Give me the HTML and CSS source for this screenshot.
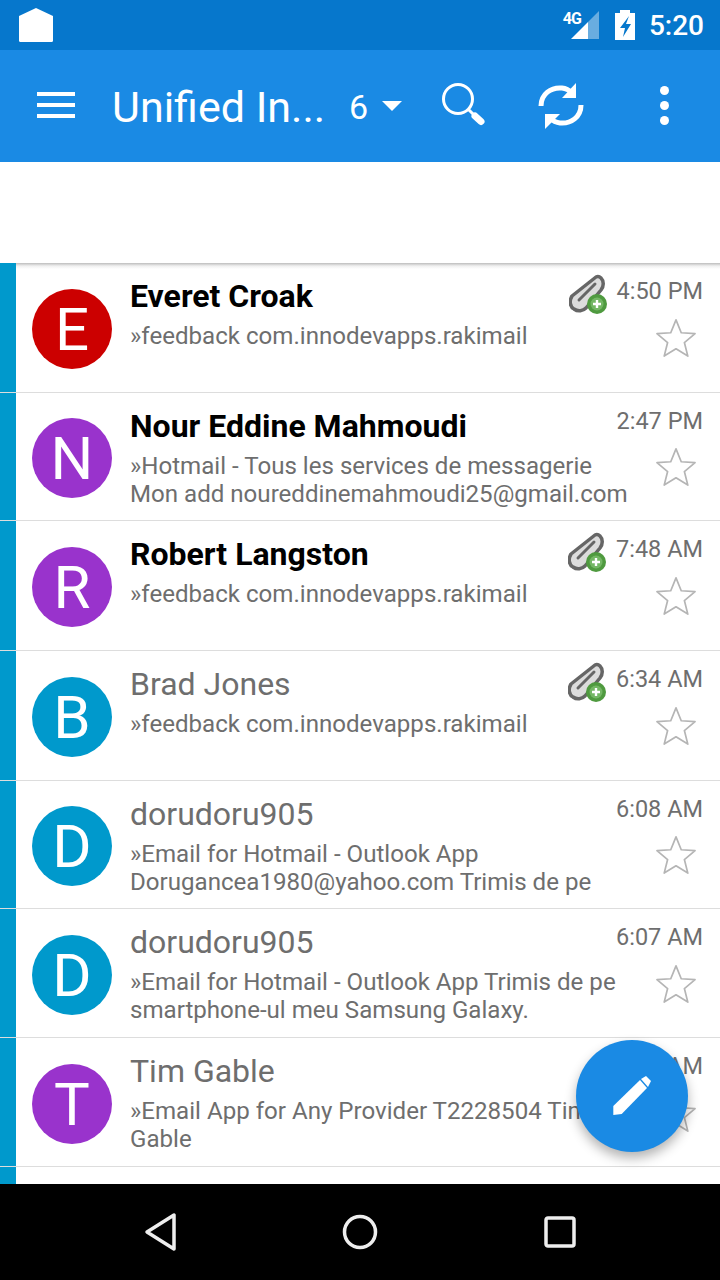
FILE: index.html
```html
<!DOCTYPE html>
<html lang="en">
<head>
  <meta charset="UTF-8">
  <meta name="viewport" content="width=device-width, initial-scale=1.0">
  <title>Unified Inbox</title>
  <link rel="stylesheet" href="styles.css">
</head>
<body>
  <div class="phone">
    <!-- Status bar -->
    <div class="status-bar">
      <svg class="notif-icon" width="34" height="34" viewBox="0 0 34 34"><path d="M0 8 17 0l17 8v24.500a1.500 1.500 0 0 1-1.500 1.500h-31A1.500 1.500 0 0 1 0 32.500z" fill="#fff"/></svg>
      <div class="status-right">
        <span class="net-label">4G</span>
        <svg class="signal" width="28" height="28" viewBox="0 0 28 28"><path d="M28 0v28H17V11z" fill="#fff" fill-opacity=".4"/><path d="M17 11v17H0z" fill="#fff"/></svg>
        <svg class="battery" width="20" height="30" viewBox="0 0 20 30"><path d="M5 0h10v3h5v27H0V3h5z" fill="#fff"/><path d="M14 6 5 18h5l-2 9 8-13h-5l3-8z" fill="#0677cc"/></svg>
        <span class="clock">5:20</span>
      </div>
    </div>

    <!-- App bar -->
    <div class="app-bar">
      <div class="menu-icon"><span></span><span></span><span></span></div>
      <div class="title">Unified In...</div>
      <div class="count">6</div>
      <div class="caret"></div>
      <svg class="search-icon" width="46" height="46" viewBox="0 0 46 46"><circle cx="17" cy="16" r="14.500" fill="none" stroke="#fff" stroke-width="3"/><path d="M27 26 34 33" stroke="#fff" stroke-width="3"/><path d="M34 33 40 38.500" stroke="#fff" stroke-width="7" stroke-linecap="round"/></svg>
      <svg class="sync-icon" width="46" height="48" viewBox="0 0 46 48"><path d="M3 24C3 12 13 5 24 6c4 .4 7 2 10 5" fill="none" stroke="#fff" stroke-width="5"/><path d="M38 1v15H24z" fill="#fff"/><path d="M43 23C43 35 33 42 22 41c-4-.4-7-2-10-5" fill="none" stroke="#fff" stroke-width="5"/><path d="M7 47V32h15z" fill="#fff"/></svg>
      <div class="more-icon"><span></span><span></span><span></span></div>
    </div>

    <!-- Empty white band above the list -->
    <div class="spacer"></div>

    <div class="list">
      <div class="row h-130 unread">
        <div class="avatar red">E</div>
        <div class="body">
          <div class="name">Everet Croak</div>
          <div class="preview">»feedback com.innodevapps.rakimail</div>
        </div>
        <div class="side">
          <div class="side-top">
            <svg class="clip-icon" viewBox="0 0 40 40"><use href="#clip"/></svg>
            <span class="time">4:50 PM</span>
          </div>
          <svg class="star" viewBox="0 0 42 42"><use href="#star"/></svg>
        </div>
      </div>
      <div class="row h-128 unread">
        <div class="avatar purple">N</div>
        <div class="body">
          <div class="name">Nour Eddine Mahmoudi</div>
          <div class="preview">»Hotmail - Tous les services de messagerie<br>Mon add noureddinemahmoudi25@gmail.com</div>
        </div>
        <div class="side">
          <div class="side-top"><span class="time">2:47 PM</span></div>
          <svg class="star" viewBox="0 0 42 42"><use href="#star"/></svg>
        </div>
      </div>
      <div class="row h-130 unread">
        <div class="avatar purple">R</div>
        <div class="body">
          <div class="name">Robert Langston</div>
          <div class="preview">»feedback com.innodevapps.rakimail</div>
        </div>
        <div class="side">
          <div class="side-top">
            <svg class="clip-icon" viewBox="0 0 40 40"><use href="#clip"/></svg>
            <span class="time">7:48 AM</span>
          </div>
          <svg class="star" viewBox="0 0 42 42"><use href="#star"/></svg>
        </div>
      </div>
      <div class="row h-130">
        <div class="avatar blue">B</div>
        <div class="body">
          <div class="name">Brad Jones</div>
          <div class="preview">»feedback com.innodevapps.rakimail</div>
        </div>
        <div class="side">
          <div class="side-top">
            <svg class="clip-icon" viewBox="0 0 40 40"><use href="#clip"/></svg>
            <span class="time">6:34 AM</span>
          </div>
          <svg class="star" viewBox="0 0 42 42"><use href="#star"/></svg>
        </div>
      </div>
      <div class="row h-128">
        <div class="avatar blue">D</div>
        <div class="body">
          <div class="name">dorudoru905</div>
          <div class="preview">»Email for Hotmail - Outlook App<br>Dorugancea1980@yahoo.com Trimis de pe</div>
        </div>
        <div class="side">
          <div class="side-top"><span class="time">6:08 AM</span></div>
          <svg class="star" viewBox="0 0 42 42"><use href="#star"/></svg>
        </div>
      </div>
      <div class="row h-129">
        <div class="avatar blue">D</div>
        <div class="body">
          <div class="name">dorudoru905</div>
          <div class="preview">»Email for Hotmail - Outlook App Trimis de pe<br>smartphone-ul meu Samsung Galaxy.</div>
        </div>
        <div class="side">
          <div class="side-top"><span class="time">6:07 AM</span></div>
          <svg class="star" viewBox="0 0 42 42"><use href="#star"/></svg>
        </div>
      </div>
      <div class="row h-129">
        <div class="avatar purple">T</div>
        <div class="body">
          <div class="name">Tim Gable</div>
          <div class="preview">»Email App for Any Provider T2228504 Tim<br>Gable</div>
        </div>
        <div class="side">
          <div class="side-top"><span class="time">6:02 AM</span></div>
          <svg class="star" viewBox="0 0 42 42"><use href="#star"/></svg>
        </div>
      </div>
      <div class="row-end"></div>
    </div>

    <!-- Compose button -->
    <div class="fab">
      <svg width="44" height="44" viewBox="0 0 44 44"><path d="M3.300 41V32L30 6l7 8-25.300 26z" fill="#fff"/><path d="M31 5l5-3 5 5-3 6z" fill="#fff"/></svg>
    </div>

    <!-- Nav bar -->
    <div class="nav-bar">
      <svg width="36" height="40" viewBox="0 0 36 40"><path d="M32 3v34L5 20z" fill="none" stroke="#eee" stroke-width="3.500" stroke-linejoin="round"/></svg>
      <svg width="36" height="36" viewBox="0 0 36 36"><circle cx="18" cy="18" r="15.500" fill="none" stroke="#eee" stroke-width="3.500"/></svg>
      <svg width="32" height="32" viewBox="0 0 32 32"><rect x="2" y="2" width="28" height="28" rx="2" fill="none" stroke="#eee" stroke-width="3.500"/></svg>
    </div>
  </div>

  <!-- Shared icons -->
  <svg class="defs" width="0" height="0">
    <defs>
      <symbol id="star" viewBox="0 0 42 42">
        <path d="M21 2l5.500 13.500 14.500 1-11.200 9.300 3.600 14.200L21 32.300 8.600 40l3.600-14.200L1 16.500l14.500-1z" fill="none" stroke="#b5b5b5" stroke-width="1.800" stroke-linejoin="round"/>
      </symbol>
      <symbol id="clip" viewBox="0 0 40 40">
        <path d="M27 3 3 22C0 27 1 33 5 35c4 3 9 2 12-1L32 16c3-4 3-9 0-12-1-1-3-2-5-1z" fill="#dcdcdc" stroke="#666" stroke-width="3.500" stroke-linejoin="round"/>
        <path d="M10 26 26 10" stroke="#666" stroke-width="3" stroke-linecap="round"/>
        <circle cx="28" cy="30" r="10" fill="#4f9a3f"/>
        <circle cx="28" cy="30" r="6.500" fill="#74b765"/>
        <path d="M28 26v8M24 30h8" stroke="#fff" stroke-width="2.400"/>
      </symbol>
    </defs>
  </svg>
</body>
</html>
```

FILE: styles.css
```css
/* General styles */
body {
  margin: 0;
  font-family: Roboto, sans-serif;
  background: #fff;
}

.phone {
  position: relative;
  display: flex;
  flex-direction: column;
  width: 720px;
  height: 1280px;
  overflow: hidden;
}

/* Status bar */
.status-bar {
  display: flex;
  align-items: center;
  justify-content: space-between;
  flex: 0 0 50px;
  padding: 0 16px 0 19px;
  background: #0677cc;
  color: #fff;
}

.status-right {
  display: flex;
  align-items: center;
}

.net-label {
  margin: -14px -10px 0 0;
  font-size: 16px;
  font-weight: 700;
  letter-spacing: -1px;
}

.battery {
  margin: 0 14px 0 16px;
}

.clock {
  font-size: 28px;
  font-weight: 500;
}

/* App bar */
.app-bar {
  display: flex;
  align-items: center;
  flex: 0 0 112px;
  background: #1a8ae4;
  color: #fff;
}

.menu-icon {
  display: flex;
  flex-direction: column;
  gap: 7px;
  width: 38px;
  margin: -2px 0 0 37px;
}

.menu-icon span {
  height: 4px;
  background: #fff;
}

.title {
  width: 237px;
  margin: 2px 0 0 37px;
  font-size: 43px;
}

.count {
  margin-top: 2px;
  font-size: 34px;
}

.caret {
  width: 0;
  height: 0;
  margin-left: 14px;
  border-left: 10px solid transparent;
  border-right: 10px solid transparent;
  border-top: 10px solid #fff;
}

.search-icon {
  margin-left: 39px;
}

.sync-icon {
  margin-left: 51px;
}

.more-icon {
  display: flex;
  flex-direction: column;
  gap: 6px;
  margin: -2px 0 0 76px;
}

.more-icon span {
  width: 9px;
  height: 9px;
  border-radius: 50%;
  background: #fff;
}

.spacer {
  flex: 0 0 101px;
  background: #fff;
}

/* Message list */
.list {
  flex: 1;
  overflow: hidden;
}

.row {
  display: flex;
  box-sizing: border-box;
  padding: 0 17px 0 16px;
  border-bottom: 1px solid #ddd;
  background: linear-gradient(to right, #0099cc 16px, #fff 16px);
}

.row:first-child {
  background: linear-gradient(to right, #0099cc 16px, transparent 16px), linear-gradient(#bdbdbd, #f0f0f0 3px, #fff 6px);
}

.h-128 { height: 128px; }
.h-129 { height: 129px; }
.h-130 { height: 130px; }

.row-end {
  height: 20px;
  background: #0099cc;
  width: 16px;
}

.avatar {
  display: flex;
  align-items: center;
  justify-content: center;
  flex: 0 0 80px;
  height: 80px;
  margin: 26px 18px 0 16px;
  border-radius: 50%;
  color: #fff;
  font-size: 60px;
}

.h-128 .avatar {
  margin-top: 25px;
}

.red { background: #cc0000; }
.purple { background: #9933cc; }
.blue { background: #0099cc; }

.body {
  flex: 1;
  min-width: 0;
  padding-top: 13px;
  white-space: nowrap;
}

.name {
  height: 40px;
  font-size: 32px;
  line-height: 40px;
  color: #6e6e6e;
}

.unread .name {
  color: #000;
  font-weight: 700;
}

.preview {
  margin-top: 6px;
  font-size: 24.100px;
  line-height: 28px;
  color: #6e6e6e;
}

/* Zero-width column, its contents hang off to the left over the text */
.side {
  display: flex;
  flex-direction: column;
  align-items: flex-end;
  flex: 0 0 0;
  padding-top: 11px;
  white-space: nowrap;
}

.side-top {
  display: flex;
  align-items: center;
  height: 34px;
}

.time {
  font-size: 23.500px;
  color: #6e6e6e;
}

.clip-icon {
  width: 40px;
  height: 40px;
  margin: 6px 8px 0 0;
}

.star {
  flex: none;
  width: 40px;
  height: 40px;
  margin: 10px 7px 0 0;
}

.h-128 .star {
  margin-top: 9px;
}

.defs {
  position: absolute;
}

/* Compose button */
.fab {
  position: absolute;
  left: 576px;
  top: 1040px;
  display: flex;
  align-items: center;
  justify-content: center;
  width: 112px;
  height: 112px;
  border-radius: 50%;
  background: #1a8ae4;
  box-shadow: 0 6px 12px rgba(0, 0, 0, 0.3);
}

/* Nav bar */
.nav-bar {
  position: relative;
  display: grid;
  grid-template-columns: repeat(3, 200px);
  justify-content: center;
  justify-items: center;
  align-items: center;
  flex: 0 0 96px;
  background: #000;
}
```
